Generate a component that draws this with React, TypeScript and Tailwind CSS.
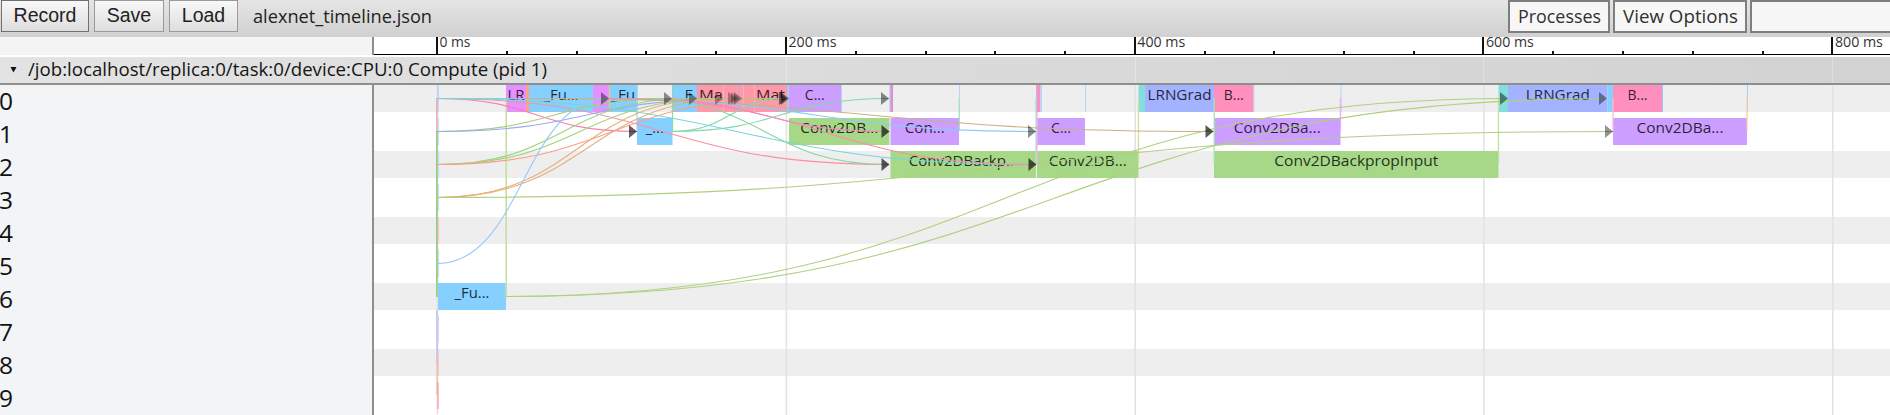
import React from "react";

type Bar = [x1: number, x2: number, row: number, color: string, label?: string, labelWidth?: number];
type Flow = [x1: number, row1: number, x2: number, row2: number, color: string];
type Step = [x: number, y1: number, y2: number, color: string, width?: number];
type Arrow = [x: number, row: number, opacity: number];

const TOP = 85;
const PITCH = 33;
const HEIGHT = 27;
const mid = (row: number) => TOP + row * PITCH + 13.5;

const BLUE = "#85d0ff";
const PINK = "#ff8fbd";
const ROSE = "#ff99aa";
const PURPLE = "#cc9eff";
const MAGENTA = "#e68fff";
const GREEN = "#a6d888";
const INDIGO = "#a3b3ff";
const TEAL = "#85dede";
const ORANGE = "#ffa285";
const PALE = "#b8d4fa";

const bars: Bar[] = [
  [506, 526, 0, MAGENTA, "LR", 17],
  [526, 529, 0, ORANGE],
  [529, 593, 0, BLUE, "_Fu...", 35],
  [593, 608, 0, MAGENTA],
  [608, 609.5, 0, ORANGE],
  [609.5, 637, 0, BLUE, "_Fu", 24],
  [637, 638, 0, PALE],
  [672, 673, 0, "#85dab0"],
  [673, 697, 0, BLUE, "_F", 15],
  [697, 787, 0, ROSE],
  [787, 788.5, 0, TEAL],
  [788.5, 841, 0, PURPLE, "C...", 20],
  [841, 842, 0, PALE],
  [889.5, 890.5, 0, "#a9b8f5"],
  [890.5, 893, 0, "#d98fd0"],
  [959, 960, 0, PALE],
  [1036, 1037, 0, "#9dc4f5"],
  [1037, 1040.5, 0, PINK],
  [1040.5, 1042, 0, PALE],
  [1085, 1086, 0, PALE],
  [1138.5, 1145, 0, TEAL],
  [1145, 1214, 0, INDIGO, "LRNGrad", 64],
  [1214, 1253.5, 0, PINK, "B...", 20],
  [1253.5, 1254.5, 0, PALE],
  [1340.5, 1341.5, 0, PALE],
  [1498.5, 1508, 0, TEAL],
  [1508, 1607.5, 0, INDIGO, "LRNGrad", 64],
  [1607.5, 1613, 0, BLUE],
  [1613, 1662, 0, PINK, "B...", 20],
  [1662, 1663, 0, "#9dc4f5"],
  [1747, 1748, 0, "#a9ccf8"],
  [637, 672.5, 1, BLUE, "_...", 18],
  [789, 889.5, 1, GREEN, "Conv2DB...", 78],
  [890.5, 959, 1, PURPLE, "Con...", 40],
  [1037, 1085, 1, PURPLE, "C...", 20],
  [1214, 1340.5, 1, PURPLE, "Conv2DBa...", 87],
  [1613, 1747, 1, PURPLE, "Conv2DBa...", 87],
  [890.5, 1036, 2, GREEN, "Conv2DBackp...", 109],
  [1037, 1138.5, 2, GREEN, "Conv2DB...", 78],
  [1214, 1498.5, 2, GREEN, "Conv2DBackpropInput", 164],
  [438, 506, 6, BLUE, "_Fu...", 35],
];

const flows: Flow[] = [
  [437, 0, 637, 1, "#f77fb0"],
  [437, 0, 889, 2, "#ff8da1"],
  [437, 0, 1036, 2, "#78d5de"],
  [437, 0, 672, 0, "#78d5de"],
  [437, 1, 672, 0, "#a8cf7c"],
  [437, 1, 737, 0, "#9ca9f7"],
  [437, 2, 690, 0, "#9fd27c"],
  [437, 2, 723, 0, "#9fd27c"],
  [437, 2, 788, 0, "#f9a088"],
  [437, 3, 720, 0, "#e5b07a"],
  [437, 3, 738, 0, "#e5b07a"],
  [437, 3, 1613, 1, "#b0d080"],
  [437, 5, 609, 0, "#93c8fa"],
  [506, 6, 1508, 0, "#b0d080"],
  [506, 6, 1607, 0, "#b0d080"],
  [526, 0, 788, 0, "#d3bf70"],
  [526, 0, 1214, 1, "#c9b183"],
  [594, 0, 1036, 1, "#88ccfa"],
  [609, 0, 1036, 2, "#ff86b0"],
  [637, 0, 889, 1, "#f08ac0"],
  [640, 0, 889, 2, "#86d6a0"],
  [637, 0, 788, 0, "#a5cf80"],
  [672, 1, 788, 0, "#82d8aa"],
  [672, 1, 889, 0, "#82d8aa"],
];

const steps: Step[] = [
  [438, 85, 112, "#a3d0fc"],
  [438.5, 118, 145, "#c6e0fc"],
  [438.5, 151, 178, "#c6e0fc"],
  [438.5, 184, 211, "#c6e0fc"],
  [438.5, 217, 244, "#fbc9c9"],
  [438.5, 250, 277, "#c6e0fc"],
  [436.8, 98, 131, "#f2a0a0"],
  [436.9, 131, 297, "#9ccb86", 1.8],
  [437, 310, 363, "#a9bff0"],
  [438.2, 316, 343, "#ddc8f2"],
  [437, 363, 395, "#f2bf98"],
  [438, 349, 376, "#f6b9be"],
  [438, 382, 409, "#ff9aab"],
  [506.2, 98, 297, "#c6e0a4", 1.6],
  [637, 98, 131, "#b9ccff"],
  [672.5, 98, 131, "#8edd9f"],
  [959.3, 98, 131, "#a5dfbd"],
  [1036, 98, 164, "#a0dfe0"],
  [1037, 112, 164, "#f4b2d8"],
  [1138.5, 98, 164, "#d5dba0"],
  [1214.2, 98, 164, "#a5e5b0"],
  [1340.5, 98, 131, "#f2a8f6"],
  [1498.5, 98, 164, "#b8e3a0"],
  [1613, 98, 131, "#ffb6d4"],
  [1747, 98, 131, "#f4cda4"],
];

const arrows: Arrow[] = [
  [609, 0, 0.42], [672, 0, 0.42], [697, 0, 0.4], [723, 0, 0.3],
  [736, 0, 0.3], [739, 0, 0.3], [742, 0, 0.35], [787, 0, 0.5], [789, 0, 0.45],
  [889, 0, 0.45], [1508, 0, 0.45], [1607, 0, 0.42],
  [637, 1, 0.62], [889.5, 1, 0.65], [1036, 1, 0.45], [1213.5, 1, 0.65], [1613, 1, 0.42],
  [889.5, 2, 0.65], [1036.5, 2, 0.65],
];

const majors = [437, 786, 1134.8, 1483.4, 1832.4];
const minors = majors.flatMap((x) => [1, 2, 3, 4].map((n) => x + n * 69.8)).filter((x) => x < 1890);

function ToolButton({ children, className }: { children: React.ReactNode; className: string }) {
  return (
    <button
      className={`${className} flex h-8 items-center justify-center border bg-linear-to-b from-[#f8f8f8] to-[#dedede] pb-px font-['Liberation_Sans',sans-serif] text-[19.5px] leading-none text-[#222]`}
    >
      {children}
    </button>
  );
}

function MenuBox({ text, width, className }: { text?: string; width?: number; className: string }) {
  return (
    <div className={`${className} h-[33px] shrink-0 border-2 border-[#7e7e7e] bg-[#f7f7f7]`}>
      {text && (
        <svg className="block h-full w-full">
          <text x="8" y="21" textLength={width} lengthAdjust="spacingAndGlyphs" className="fill-[#303030] text-[19px]">
            {text}
          </text>
        </svg>
      )}
    </div>
  );
}

function Ruler() {
  return (
    <svg viewBox="374 37 1516 18" className="block h-[18px] w-[1516px] bg-white">
      {majors.map((x, i) => (
        <g key={x}>
          <rect x={Math.round(x) - 1} y="37" width="2" height="17" fill="#111" />
          <text
            x={x + 2.5}
            y="46.7"
            textLength={i === 0 ? 31 : 48}
            lengthAdjust="spacingAndGlyphs"
            className="fill-[#333] text-[15px]"
          >
            {i * 200} ms
          </text>
        </g>
      ))}
      {minors.map((x) => (
        <rect key={x} x={Math.round(x) - 1} y="51" width="2" height="3" fill="#111" />
      ))}
      <rect x="374" y="54" width="1516" height="1" fill="#000" />
    </svg>
  );
}

function Timeline() {
  return (
    <svg viewBox="374 85 1516 330" className="block h-[330px] w-[1516px] bg-white">
      {[0, 2, 4, 6, 8].map((r) => (
        <rect key={r} x="374" y={TOP + r * PITCH} width="1516" height={HEIGHT} fill="#eeeeee" />
      ))}
      {majors.map((x) => (
        <rect key={x} x={x - 0.4} y="85" width="1.6" height="330" fill="#e3e3e3" />
      ))}
      {bars.map(([x1, x2, row, color, label, w], i) => (
        <g key={i}>
          <rect x={x1} y={TOP + row * PITCH} width={x2 - x1} height={HEIGHT} fill={color} />
          {label && (
            <text
              x={(x1 + x2) / 2 - (w ?? 0) / 2}
              y={TOP + row * PITCH + 14.6}
              textLength={w}
              lengthAdjust="spacingAndGlyphs"
              className="fill-[#000000cc] text-[15px]"
            >
              {label}
            </text>
          )}
        </g>
      ))}
      {[723, 738.5, 743, 754].map((x) => (
        <rect key={x} x={x} y="85" width="1" height={HEIGHT} fill={x === 738.5 ? "#c0a8dc" : "#ffb0b4"} />
      ))}
      <text x="699" y="99.6" textLength="24" lengthAdjust="spacingAndGlyphs" className="fill-[#000000cc] text-[15px]">Ma</text>
      <text x="756" y="99.6" textLength="29" lengthAdjust="spacingAndGlyphs" className="fill-[#000000cc] text-[15px]">Mat</text>
      {steps.map(([x, y1, y2, color, w], i) => (
        <line key={i} x1={x} x2={x} y1={y1} y2={y2} stroke={color} strokeWidth={w ?? 1.3} />
      ))}
      {flows.map(([x1, r1, x2, r2, color], i) => {
        const c = (x1 + x2) / 2;
        return (
          <path
            key={i}
            d={`M${x1} ${mid(r1)}C${c} ${mid(r1)} ${c} ${mid(r2)} ${x2} ${mid(r2)}`}
            fill="none"
            stroke={color}
            strokeWidth="1.1"
          />
        );
      })}
      {arrows.map(([x, row, o], i) => (
        <path key={i} d={`M${x} ${mid(row)}l-8 -6.5v13z`} fill="#000" fillOpacity={o} />
      ))}
    </svg>
  );
}

export default function App() {
  return (
    <div className="flex h-[415px] w-[1890px] flex-col overflow-hidden bg-white font-['Open_Sans','Noto_Sans',sans-serif]">
      <header className="flex h-[37px] shrink-0 items-start bg-linear-to-b from-[#e5e5e5] to-[#d0d0d0] pl-px">
        <ToolButton className="mr-[5px] w-[88px] border-[#707070]">Record</ToolButton>
        <ToolButton className="mr-[5px] w-[70px] border-[#9a9a9a]">Save</ToolButton>
        <ToolButton className="w-[69px] border-[#9a9a9a]">Load</ToolButton>
        <svg className="ml-[15px] h-[37px] w-[200px]">
          <text x="0" y="22.5" textLength="179" lengthAdjust="spacingAndGlyphs" className="fill-[#222] text-[18.5px]">
            alexnet_timeline.json
          </text>
        </svg>
        <div className="ml-auto flex gap-[3px]">
          <MenuBox className="w-[102px]" text="Processes" width={83} />
          <MenuBox className="w-[134px]" text="View Options" width={115} />
          <MenuBox className="w-[140px] border-r-0" />
        </div>
      </header>
      <div className="mb-[2px] flex h-[18px] shrink-0">
        <div className="w-[374px] shrink-0 border-r-2 border-[#8e8e8e] bg-[#f3f4f6]" />
        <Ruler />
      </div>
      <div className="flex h-[28px] shrink-0 border-b-2 border-[#8e8e8e] bg-linear-to-r from-[#e3e3e3] to-[#d2d2d2]">
        <svg className="block h-[26px] w-full">
          {majors.map((x) => (
            <rect key={x} x={Math.round(x)} y="0" width="1" height="26" fill="#fff" fillOpacity="0.3" />
          ))}
          <path d="M10.5 10h6l-3 5.5z" fill="#111" />
          <text x="28" y="19" textLength="519" lengthAdjust="spacingAndGlyphs" className="fill-[#151515] text-[18.5px]">
            /job:localhost/replica:0/task:0/device:CPU:0 Compute (pid 1)
          </text>
        </svg>
      </div>
      <main className="flex h-[330px] shrink-0">
        <div className="flex w-[374px] shrink-0 flex-col border-r-2 border-[#8e8e8e] bg-[#f3f4f6]">
          {Array.from({ length: 10 }, (_, i) => (
            <div key={i} className="-ml-px h-[33px] text-[24.5px] leading-[31px] text-[#111]">
              {i}
            </div>
          ))}
        </div>
        <Timeline />
      </main>
    </div>
  );
}
